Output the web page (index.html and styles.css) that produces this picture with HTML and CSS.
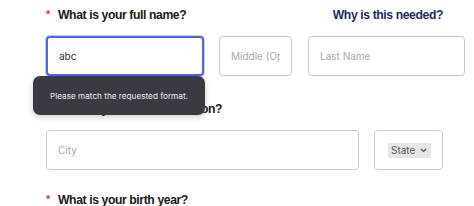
FILE: index.html
```html
<!DOCTYPE html>
<html lang="en">
<head>
    <meta charset="UTF-8">
    <meta name="viewport" content="width=device-width, initial-scale=1.0">
    <title>Your Details</title>
    <link rel="stylesheet" href="styles.css">
</head>
<body>

    <div class="form-container">
        <div class="question">
            <div class="question-head">
                <h3><span class="req">*</span>What is your full name?</h3>
                <a class="why" href="#">Why is this needed?</a>
            </div>
            <div class="row name-row">
                <div class="field-wrap">
                    <input type="text" class="field first focused" value="abc">
                    <div class="tooltip">Please match the requested format.</div>
                </div>
                <input type="text" class="field middle" placeholder="Middle (Optional)">
                <input type="text" class="field last" placeholder="Last Name">
            </div>
        </div>

        <div class="question second">
            <div class="question-head">
                <h3><span class="req">*</span>What is your current location?</h3>
            </div>
            <div class="row">
                <input type="text" class="field city" placeholder="City">
                <div class="field state">
                    <span class="state-pill">State
                        <svg width="7" height="5" viewBox="0 0 7 5"><path d="M1 1 L3.5 3.5 L6 1" fill="none" stroke="#555" stroke-width="1.2"/></svg>
                    </span>
                </div>
            </div>
        </div>

        <div class="question third">
            <div class="question-head">
                <h3><span class="req">*</span>What is your birth year?</h3>
            </div>
        </div>
    </div>

</body>
</html>
```

FILE: styles.css
```css
body {
    margin: 0;
    background-color: #fff;
    font-family: Inter, "Noto Sans", sans-serif;
    overflow: hidden;
}

.form-container {
    padding: 5px 9px 0 46px;
}

.question-head {
    display: flex;
    justify-content: space-between;
    align-items: center;
    height: 20px;
    width: 397px;
}

.question-head h3 {
    position: relative;
    margin: 0;
    font-family: "Liberation Sans", Arial, sans-serif;
    font-size: 12.2px;
    letter-spacing: -0.4px;
    font-weight: bold;
    color: #1a1a1a;
    padding-left: 12px;
    line-height: 20px;
}

.req {
    position: absolute;
    left: 0;
    top: -1px;
    color: #e0383e;
    font-size: 11px;
}

.why {
    font-family: "Liberation Sans", Arial, sans-serif;
    font-size: 12.2px;
    letter-spacing: -0.4px;
    font-weight: bold;
    color: #1f2d5c;
    text-decoration: none;
}

.row {
    display: flex;
    margin-top: 11px;
}

.field-wrap {
    position: relative;
}

.field {
    box-sizing: border-box;
    height: 40px;
    border: 1px solid #c9c9cd;
    border-radius: 4px;
    padding: 0 11px;
    font-family: Inter, "Noto Sans", sans-serif;
    font-size: 10px;
    color: #333;
    background: #fff;
    outline: none;
}

.field::placeholder {
    color: #a9a9ae;
}

.first {
    width: 158px;
    border: 2px solid #5466dc;
    box-shadow: 0 0 0 1px #c6cdf4;
    caret-color: #222;
}

.middle {
    width: 73px;
    margin-left: 15px;
}

.last {
    width: 157px;
    margin-left: 16px;
}

.tooltip {
    position: absolute;
    left: -13px;
    top: 40px;
    width: 172px;
    height: 39px;
    box-sizing: border-box;
    padding-left: 17px;
    display: flex;
    align-items: center;
    white-space: nowrap;
    background: #3b3a42;
    color: #ececee;
    font-size: 8.2px;
    border-radius: 7px;
    box-shadow: 0 2px 6px rgba(0, 0, 0, 0.2);
    z-index: 2;
}

.second {
    margin-top: 23px;
}

.second .row {
    margin-top: 11px;
}

.city {
    width: 313px;
}

.state {
    width: 69px;
    margin-left: 15px;
    display: flex;
    align-items: center;
    padding-left: 13px;
}

.state-pill {
    display: flex;
    align-items: center;
    gap: 5px;
    background: #e6e6ea;
    color: #555;
    font-size: 10px;
    padding: 0 4px 0 3px;
    height: 15px;
}

.third {
    margin-top: 20px;
}
```
